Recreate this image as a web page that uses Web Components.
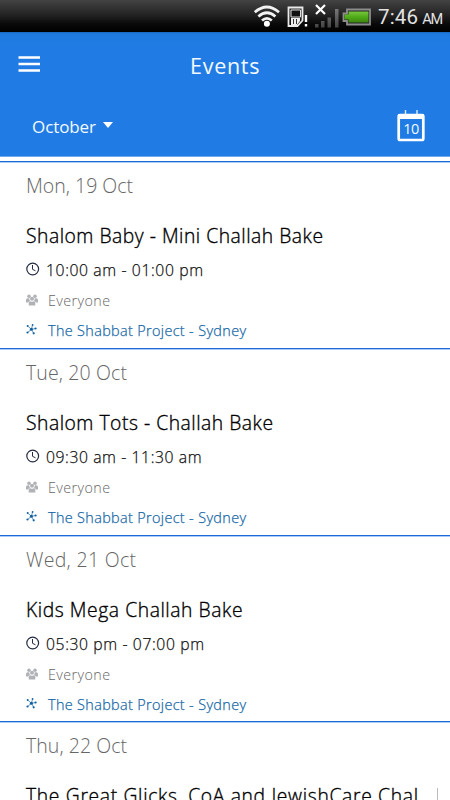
<!DOCTYPE html>
<html lang="en"><head><meta charset="utf-8"><title>Events</title>
<style>html,body{margin:0;height:800px;overflow:hidden;background:#fff}body{font-family:"Open Sans","Noto Sans",sans-serif}</style></head>
<body><events-app></events-app>
<script>
const make=(name,html,init)=>customElements.define(name,class extends HTMLElement{
 connectedCallback(){ if(this.shadowRoot)return; const t=document.createElement('template');
  t.innerHTML=typeof html==='function'?html(this):html;
  this.attachShadow({mode:'open'}).append(t.content.cloneNode(true)); if(init)init(this);} });

// One line of text, tracked so that it fills the width given in its "w" attribute.
make('fit-text',`<style>:host{display:block;white-space:pre}span{display:inline-block}</style><span><slot></slot></span>`,el=>{
 const s=el.shadowRoot.querySelector('span'), n=el.textContent.length;
 const d=(+el.getAttribute('w')-s.getBoundingClientRect().width)/(n-1);
 s.style.letterSpacing=d.toFixed(3)+'px';
});

make('status-bar',`<style>
:host{display:flex;box-sizing:border-box;height:32px;justify-content:flex-end;padding-right:8px;background:linear-gradient(#434343,#242424 45%,#090909 75%,#000);color:#e2e2e2;font-family:Roboto,sans-serif}
svg{flex:none;width:132px;height:32px;margin-right:5px}
.t{display:flex;align-items:baseline;gap:4px;line-height:34px;font-size:20.500px}.t .s{font-size:14.500px}
</style>
<svg viewBox="240 0 132 32"><defs><linearGradient id="g" x2="0" y2="1"><stop stop-color="#77c73c"/><stop offset=".5" stop-color="#50aa19"/><stop offset="1" stop-color="#3d850e"/></linearGradient><linearGradient id="b" x2="0" y2="1"><stop stop-color="#777"/><stop offset="1" stop-color="#444"/></linearGradient></defs>
<g fill="none" stroke="#f2f2f2" stroke-width="2.7"><path d="M253.800 12.200Q265.900 1.800 278 12.200"/><path d="M257.400 16.500Q265.900 9 274.400 16.500"/><path d="M261 20.500Q265.900 16.200 270.800 20.500"/></g><circle cx="265.900" cy="23.700" r="3" fill="#fff"/>
<path d="M287.500 7.500H301.500V20.500L296.500 26H287.500Z" fill="none" stroke="#e9e9e9" stroke-width="1.800"/><path d="M290 10h9.500v7H290z" fill="#111" stroke="#ddd"/><path d="M290 18h9v3l-3 4h-6z" fill="#eee"/><path d="M292.500 19v5M295.500 19v5" stroke="#333"/>
<path d="M303.800 15h2.400v7h-2.400zM303.800 24h2.400v2.500h-2.400z" fill="#fff"/>
<path d="M315 5l9 9M324 5l-9 9" stroke="#fff" stroke-width="2.200"/>
<path d="M314 24h3.500v3.500H314zM320 21h3.500v6.500H320zM326.500 17.500h3.500v10h-3.500zM334 9h3.500v18.500H334z" fill="url(#b)"/>
<path d="M346 9.500H369V24.500H346V21H342.500V13.500H346Z" fill="#222" stroke="#8d8d8d" stroke-width="1.800"/><path d="M347.500 11.500h20v11h-20V19.500h-4V14.500h4z" fill="url(#g)"/></svg>
<div class="t"><fit-text w="40">7:46</fit-text><fit-text class="s" w="21">AM</fit-text></div>`);

make('app-header',`<style>
:host{display:flex;flex-direction:column;height:125px;box-sizing:border-box;background:linear-gradient(#1768bf,#1f7ae0 2px,#207ce4 16px);color:#f4f9ff;border-bottom:1px solid #71a9ef}
.top{display:grid;grid-template-columns:190px auto 1fr;height:68px;align-items:center}
.menu{width:22px;height:18px;margin:-5px 0 0 18px}
.title{font-size:21.500px;margin-top:-2px}
.filters{display:flex;align-items:center;height:56px;padding:0 25px 0 32px;font-size:17px}
.filters fit-text{margin-top:-4px}
.arrow{width:10px;height:6px;margin:-6px 0 0 7px}.cal{width:28px;height:32px;margin:-5px 0 0 auto}
</style><div class="top"><svg class="menu" viewBox="0 0 22 18"><path d="M.500 2.500h21.500M.500 9h21.500M.500 15.500h21.500" stroke="#fff" stroke-width="2.300"/></svg><fit-text class="title" w="69.500">Events</fit-text></div>
<div class="filters"><fit-text w="64">October</fit-text><svg class="arrow" viewBox="0 0 10 6"><path d="M0 0h10L5 6z" fill="#fff"/></svg>
<svg class="cal" viewBox="0 0 28 32"><path d="M8.500 0v5M20 0v5" stroke="#d9ebff" stroke-width="1.400"/><rect x="1.700" y="5" width="24.600" height="25" rx="1.500" fill="none" stroke="#fff" stroke-width="2.700"/><path d="M1 4h26v5H1z" fill="#fff"/><text x="6.200" y="24" textLength="16" font-family="Open Sans" font-size="14.500" fill="#f2f8ff">10</text></svg></div>`);

make('event-row',el=>{const a=n=>el.getAttribute(n);return `<style>
:host{display:block;box-sizing:border-box;height:var(--h,187px);background:linear-gradient(#2068d2 1px,#a9cbf5 1px,#a9cbf5 2px,#fff 2px);padding-top:1px;padding-left:26px;overflow:hidden;color:#111;font-weight:300}
.date{font-size:19.500px;line-height:28px;padding-top:10px;color:#666}
.title{font-size:19.300px;-webkit-text-stroke:.35px;line-height:28px;padding-top:22px;color:#000}
.title fit-text{display:inline-block}
.head{display:flex}.bar{width:1px;height:20px;margin:28px 0 0 18px;background:#bbb}
.line{display:flex;align-items:center;height:30px}
.time{height:33px;margin-top:3px;font-size:15.700px;-webkit-text-stroke:.25px}
.who{height:28px;font-size:14.300px;color:#666}.org{height:32px;font-size:14.400px;-webkit-text-stroke:.25px;color:#1769a8}
svg{flex:none;width:14px;height:14px}.time svg{margin:-1px 6px 0 0}.who svg{width:12px;height:12px;margin:-1px 10px 0 0}.org svg{width:12px;height:12px;margin:-3px 10px 0 0}
</style><div class="date"><fit-text w="${a('dw')}">${a('date')}</fit-text></div>
<div class="head"><div class="title"><fit-text w="${a('tw')}"><slot></slot></fit-text></div>${a('more')!==null?'<div class="bar"></div>':''}</div>
${a('time')?`<div class="line time"><svg viewBox="0 0 14 14"><circle cx="6.700" cy="7" r="5.900" fill="none" stroke="#252b42" stroke-width="1.200"/><path d="M6.500 3v4.300l3 1.500" fill="none" stroke="#252b42" stroke-width="1"/></svg><fit-text w="${a('timew')}">${a('time')}</fit-text></div>
<div class="line who"><svg viewBox="0 0 12 12"><g fill="#b0b2b6"><circle cx="3" cy="2.200" r="1.800"/><circle cx="9" cy="2.200" r="1.800"/><circle cx="6" cy="4.700" r="2"/><path d="M0 8.500V6q0-1.700 1.700-1.700h1.600Q3.300 6.300 4.100 6.900 2.500 7 2.300 8.500zM12 8.500V6q0-1.700-1.700-1.700H8.700Q8.700 6.300 7.900 6.900q1.600.1 1.800 1.600zM2.700 11.500V9.300q0-2 1.800-2Q6 8.300 7.500 7.300q1.800 0 1.800 2v2.200z"/></g></svg><fit-text w="62">Everyone</fit-text></div>
<div class="line org"><svg viewBox="0 0 12 12"><path d="M5.500 6.300L2.300 3.600M5.500 6.300L6.500 2M5.500 6.300L9.700 5.500M5.500 6.300L2 9.200M5.500 6.300L7.500 10" stroke="#4c8dbf" stroke-width=".900"/><g fill="#125f9d"><circle cx="5.400" cy="6.300" r="1.500"/><circle cx="1.700" cy="3" r="1"/><circle cx="6.600" cy="1.900" r=".900"/><circle cx="9.600" cy="5.500" r="1.100"/><circle cx="1.500" cy="9.500" r="1.100"/><circle cx="7.700" cy="10.300" r="1.100"/></g></svg><fit-text w="198">The Shabbat Project - Sydney</fit-text></div>`:''}`},
 el=>{ // tracking for slotted titles
  const f=el.shadowRoot.querySelector('.title fit-text'), s=f.shadowRoot.querySelector('span'); s.style.letterSpacing='0';
  s.style.letterSpacing=((+el.getAttribute('tw')-s.getBoundingClientRect().width)/(el.textContent.length-1)).toFixed(3)+'px';
 });

make('events-app',`<style>:host{display:flex;flex-direction:column;width:450px;height:800px;overflow:hidden;background:#fff}status-bar,app-header,main{flex:none}main{padding-top:4px}</style>
<status-bar></status-bar><app-header></app-header><main>
<event-row date="Mon, 19 Oct" dw="107" tw="297" time="10:00 am - 01:00 pm" timew="157">Shalom Baby - Mini Challah Bake</event-row>
<event-row date="Tue, 20 Oct" dw="101" tw="247" time="09:30 am - 11:30 am" timew="155.500">Shalom Tots - Challah Bake</event-row>
<event-row style="--h:186px" date="Wed, 21 Oct" dw="110" tw="216.500" time="05:30 pm - 07:00 pm" timew="158">Kids Mega Challah Bake</event-row>
<event-row date="Thu, 22 Oct" dw="101" tw="392" more>The Great Glicks, CoA and JewishCare Chal</event-row></main>`);
</script></body></html>
